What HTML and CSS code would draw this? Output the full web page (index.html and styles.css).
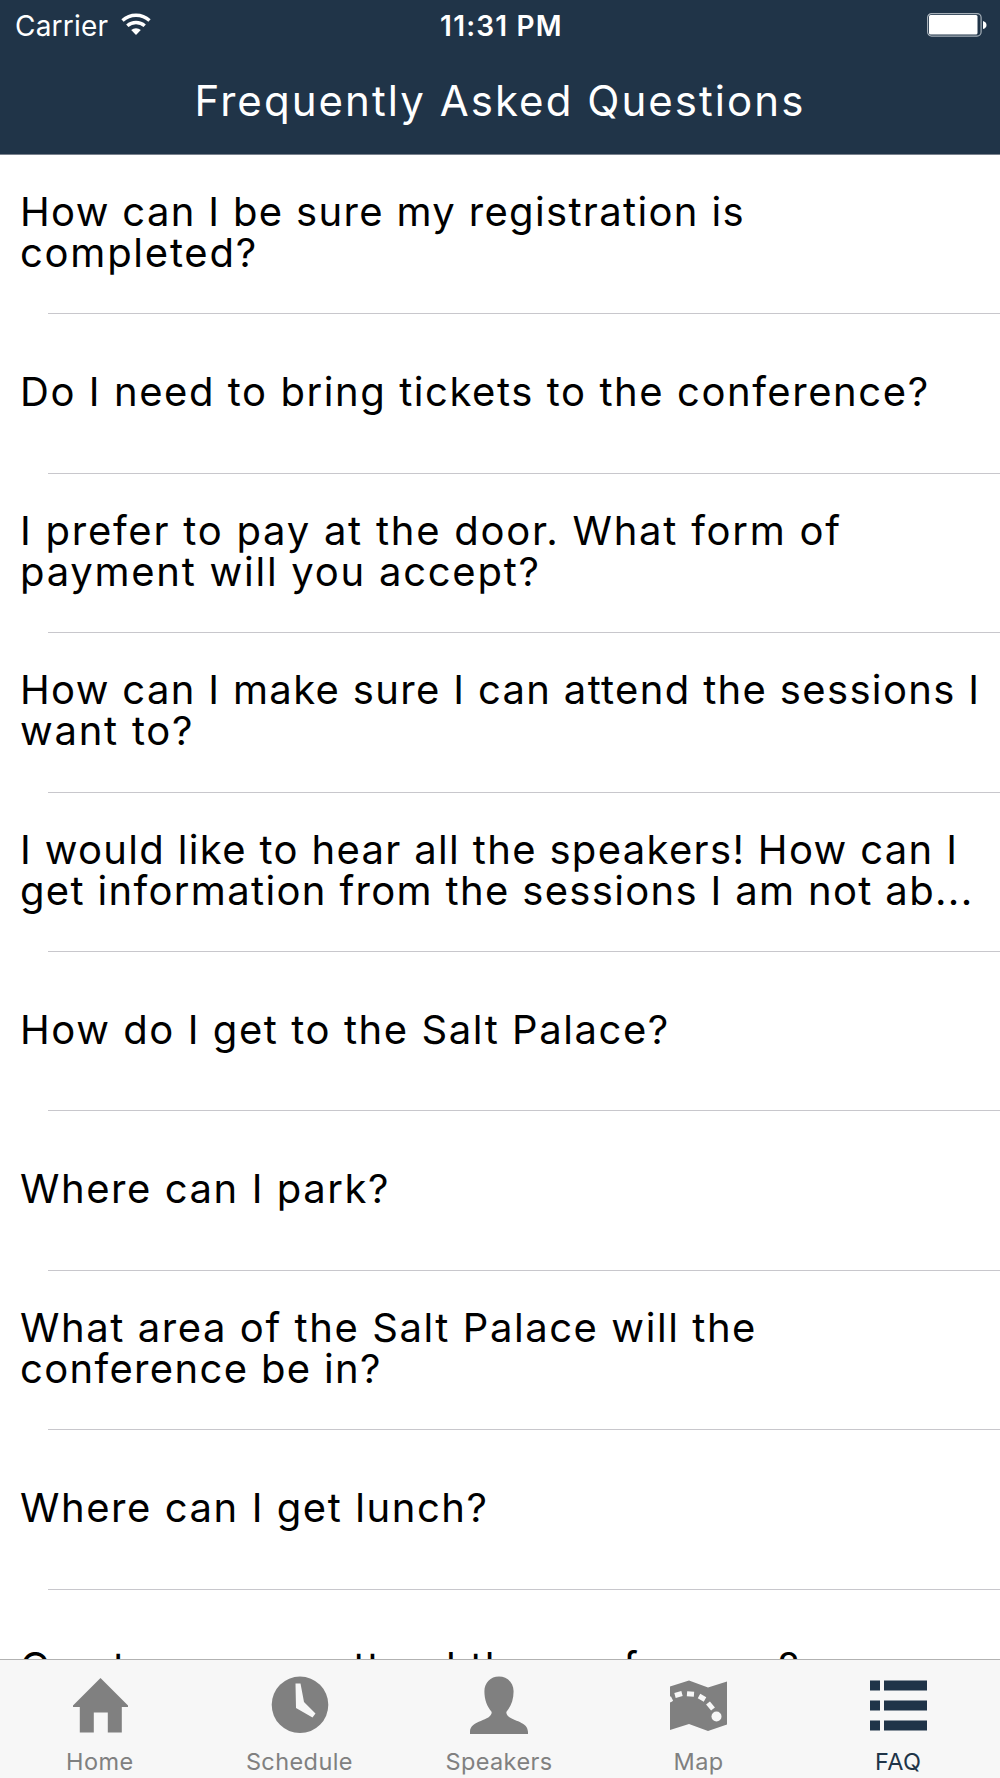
FILE: index.html
```html
<!DOCTYPE html>
<html lang="en">
<head>
  <meta charset="UTF-8" />
  <title>Frequently Asked Questions</title>
  <link rel="stylesheet" href="styles.css">
</head>
<body>
  <div class="app">
    <header class="header">
      <div class="status-bar">
        <div class="carrier">
          <span>Carrier</span>
          <svg class="wifi" width="30" height="22" viewBox="0 0 30 22">
            <path d="M1.5 7.5a20 20 0 0 1 27 0" fill="none" stroke="#fff" stroke-width="3.4"/>
            <path d="M6.3 12.8a13 13 0 0 1 17.4 0" fill="none" stroke="#fff" stroke-width="3.4"/>
            <path d="M10.2 16.9a7.5 7.5 0 0 1 9.6 0L15 22z" fill="#fff"/>
          </svg>
        </div>
        <span class="time">11:31 PM</span>
        <svg class="battery" width="60" height="24" viewBox="0 0 60 24">
          <rect x=".6" y=".6" width="53.5" height="22.5" rx="4" fill="none" stroke="#a5afb8" stroke-width="1.2"/>
          <rect x="2" y="2" width="48.5" height="19.5" rx="1.5" fill="#fff"/>
          <path d="M56 8q3.5 1 3.5 4T56 16z" fill="#fff"/>
        </svg>
      </div>
      <h1 class="title">Frequently Asked Questions</h1>
    </header>

    <ul class="faq-list">
      <li><span class="tight">How can I be sure my registration is</span><span class="loose">completed?</span></li>
      <li><span>Do I need to bring tickets to the conference?</span></li>
      <li><span class="loose">I prefer to pay at the door. What form of</span><span class="loose">payment will you accept?</span></li>
      <li><span class="tight">How can I make sure I can attend the sessions I</span><span class="loose">want to?</span></li>
      <li><span class="tight">I would like to hear all the speakers! How can I</span><span class="tight">get information from the sessions I am not ab...</span></li>
      <li><span>How do I get to the Salt Palace?</span></li>
      <li><span>Where can I park?</span></li>
      <li><span>What area of the Salt Palace will the</span><span class="tight">conference be in?</span></li>
      <li><span>Where can I get lunch?</span></li>
      <li><span>Can teenagers attend the conference?</span></li>
    </ul>

    <nav class="tab-bar">
      <a class="tab">
        <svg width="60" height="60" viewBox="0 0 60 60"><path d="M30.500 2 3 29.500V31h6.800v25.500h14v-20h14v20h14V31H58v-1.500z"/></svg>
        <span>Home</span>
      </a>
      <a class="tab">
        <svg width="60" height="60" viewBox="0 0 60 60"><circle cx="31" cy="28.800" r="28.300"/><path class="cut" d="M26.500 7.500h5L35 26l11.500 11.500-3 4L27 32z"/></svg>
        <span>Schedule</span>
      </a>
      <a class="tab">
        <svg width="60" height="60" viewBox="0 0 60 60"><path d="M30 .5c8.500 0 14.600 6.300 14.600 14.800 0 8.500-2.600 15.200-7.300 20.700 0 9.500 21.700 7.500 21.700 20V58H1v-2C1 43.500 22.700 45.500 22.700 36c-4.700-5.500-7.300-12.200-7.300-20.700C15.400 6.800 21.500.5 30 .5z"/></svg>
        <span>Speakers</span>
      </a>
      <a class="tab">
        <svg width="60" height="60" viewBox="0 0 60 60">
          <path d="M1 10.500 20 4.500l19 7 19-6v43l-19 6.500-19-7-19 6z"/>
          <path class="route" d="M0 24.500q2-1.500 3-2M6 19.500l7-2M18 17.800l7 .5M30 20l6 3.500M39 27l5 6"/>
          <circle class="cut" cx="47.500" cy="40.500" r="5"/>
        </svg>
        <span>Map</span>
      </a>
      <a class="tab active">
        <svg width="60" height="60" viewBox="0 0 60 60">
          <path d="M2 4.500h10v10H2zM16 4.500h43v10H16zM2 24.500h10v10H2zM16 24.500h43v10H16zM2 44.500h10v10H2zM16 44.500h43v10H16z"/>
        </svg>
        <span>FAQ</span>
      </a>
    </nav>
  </div>
</body>
</html>
```
FILE: styles.css
```css
* {
  box-sizing: border-box;
}
body {
  margin: 0;
  font-family: Inter, "Liberation Sans", sans-serif;
  background: #fff;
  color: #000;
}
.app {
  display: flex;
  flex-direction: column;
  height: 1778px;
  overflow: hidden;
}
.header {
  flex: none;
  height: 155px;
  background: #203448;
  color: #fff;
  border-bottom: 1px solid #79818d;
}
.status-bar {
  display: grid;
  grid-template-columns: 1fr auto 1fr;
  align-items: center;
  height: 50px;
  padding: 0 13px 0 15px;
  font-size: 28px;
}
.carrier {
  display: flex;
  align-items: center;
  gap: 13px;
  letter-spacing: 0.2px;
}
.carrier span {
  padding-top: 1px;
}
.wifi {
  margin-bottom: 3px;
}
.time {
  padding-top: 1px;
  padding-left: 1px;
  font-weight: 600;
  letter-spacing: 1.2px;
}
.battery {
  justify-self: end;
}
.title {
  margin: 0;
  text-align: center;
  font-size: 42px;
  font-weight: 400;
  line-height: 102px;
  letter-spacing: 2.05px;
}
.faq-list {
  flex: 1;
  min-height: 0;
  overflow: hidden;
  margin: 0;
  padding: 0;
  list-style: none;
}
.faq-list li {
  display: flex;
  flex-direction: column;
  justify-content: center;
  height: 159.4px;
  padding: 0 0 5px 20px;
  font-size: 40px;
  line-height: 41px;
  letter-spacing: 1.57px;
  white-space: nowrap;
  background: linear-gradient(#c8c7cc, #c8c7cc) 48px 100% / 100% 1px no-repeat;
}
.faq-list .tight {
  letter-spacing: 1.34px;
}
.faq-list .loose {
  letter-spacing: 1.75px;
}
.tab-bar {
  flex: none;
  display: grid;
  grid-template-columns: repeat(5, 1fr);
  height: 119px;
  padding-right: 2px;
  background: #f7f7f7;
  border-top: 1px solid #b2b2b2;
}
.tab {
  display: flex;
  flex-direction: column;
  align-items: center;
  padding-top: 16px;
  font-size: 23.5px;
  line-height: 28px;
  letter-spacing: 0.4px;
  color: #808080;
}
.tab svg {
  fill: currentColor;
  margin-bottom: 12px;
}
.tab .cut {
  fill: #f7f7f7;
}
.tab .route {
  fill: none;
  stroke: #f7f7f7;
  stroke-width: 5;
}
.tab.active {
  color: #203448;
}
```
